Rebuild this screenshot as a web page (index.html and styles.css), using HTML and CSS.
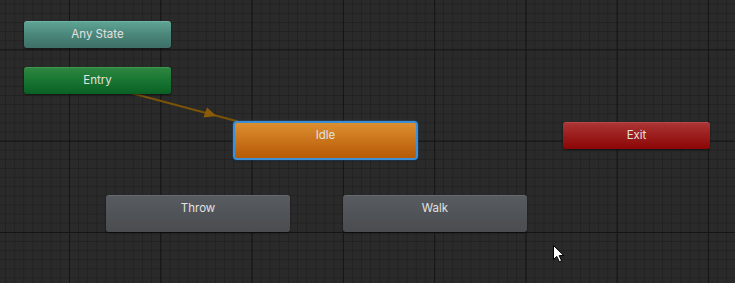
FILE: index.html
```html
<!DOCTYPE html>
<html>
<head>
<meta charset="utf-8">
<link rel="stylesheet" href="styles.css">
</head>
<body>
<div class="graph">
  <svg class="links" width="735" height="283" viewBox="0 0 735 283">
    <line x1="131" y1="93" x2="238" y2="121.5" stroke="#7a5309" stroke-width="2"/>
    <polygon points="216.5,116 203.5,117.5 207,107.5" fill="#8a5c08"/>
  </svg>
  <div class="node node-any" style="left:24px;top:21px;width:147px;height:27px">Any State</div>
  <div class="node node-entry" style="left:24px;top:67px;width:147px;height:27px">Entry</div>
  <div class="node node-idle" style="left:233px;top:121px;width:185px;height:39px">Idle</div>
  <div class="node node-exit" style="left:563px;top:122px;width:147px;height:27px">Exit</div>
  <div class="node node-state" style="left:106px;top:195px;width:184px;height:37px">Throw</div>
  <div class="node node-state" style="left:343px;top:195px;width:184px;height:37px">Walk</div>
  <svg class="cursor" width="14" height="20" viewBox="0 0 14 20">
    <path d="M1.5 1.5 L1.5 15.5 L4.8 12.4 L7.3 17.8 L9.6 16.8 L7.2 11.6 L11.8 11.6 Z" fill="#ffffff" stroke="#000000" stroke-width="1" stroke-linejoin="round"/>
  </svg>
</div>
</body>
</html>
```
FILE: styles.css
```css
html, body {
  margin: 0;
  padding: 0;
  background: #282828;
}
.graph {
  position: relative;
  width: 735px;
  height: 283px;
  overflow: hidden;
  background-color: #2a2a2a;
  background-image:
    linear-gradient(to right, #151515 0, #151515 1px, transparent 1px),
    linear-gradient(to bottom, #151515 0, #151515 1px, transparent 1px),
    linear-gradient(to right, #222222 0, #222222 1px, transparent 1px),
    linear-gradient(to bottom, #222222 0, #222222 1px, transparent 1px);
  background-size: 91.3px 91.3px, 91.3px 91.3px, 9.13px 9.13px, 9.13px 9.13px;
  background-position: 69px 0, 0 49.4px, 5.1px 0, 0 3.75px;
  font-family: Inter, "Noto Sans", sans-serif;
}
.links {
  position: absolute;
  left: 0;
  top: 0;
}
.node {
  position: absolute;
  box-sizing: border-box;
  border-radius: 3px;
  text-align: center;
  font-size: 11.5px;
  line-height: 13px;
  padding-top: 6px;
  color: #e2e2e2;
  box-shadow: 0 1px 2px rgba(0, 0, 0, 0.55);
}
.node-any {
  background: linear-gradient(to bottom, #5ea393 0%, #4a8679 50%, #3d6f66 100%);
  border-top: 1px solid #6fb4a4;
}
.node-entry {
  background: linear-gradient(to bottom, #2e8640 0%, #177531 50%, #0b6024 100%);
  border-top: 1px solid #3a9a4e;
}
.node-idle {
  padding-top: 6px;
  background: linear-gradient(to bottom, #dd8f30 0%, #c9731a 50%, #b65a06 100%);
  border: 2px solid #3d8fd6;
  border-radius: 4px;
  box-shadow: 0 0 2px #2a70b0, 0 1px 2px rgba(0, 0, 0, 0.5);
}
.node-exit {
  background: linear-gradient(to bottom, #ab3535 0%, #9b1c1c 50%, #8c0606 100%);
  border-top: 1px solid #b94848;
}
.node-state {
  background: linear-gradient(to bottom, #585b5f 0%, #505357 50%, #4a4c50 100%);
  border-top: 1px solid #66696d;
}
.cursor {
  position: absolute;
  left: 552px;
  top: 244px;
}
```
